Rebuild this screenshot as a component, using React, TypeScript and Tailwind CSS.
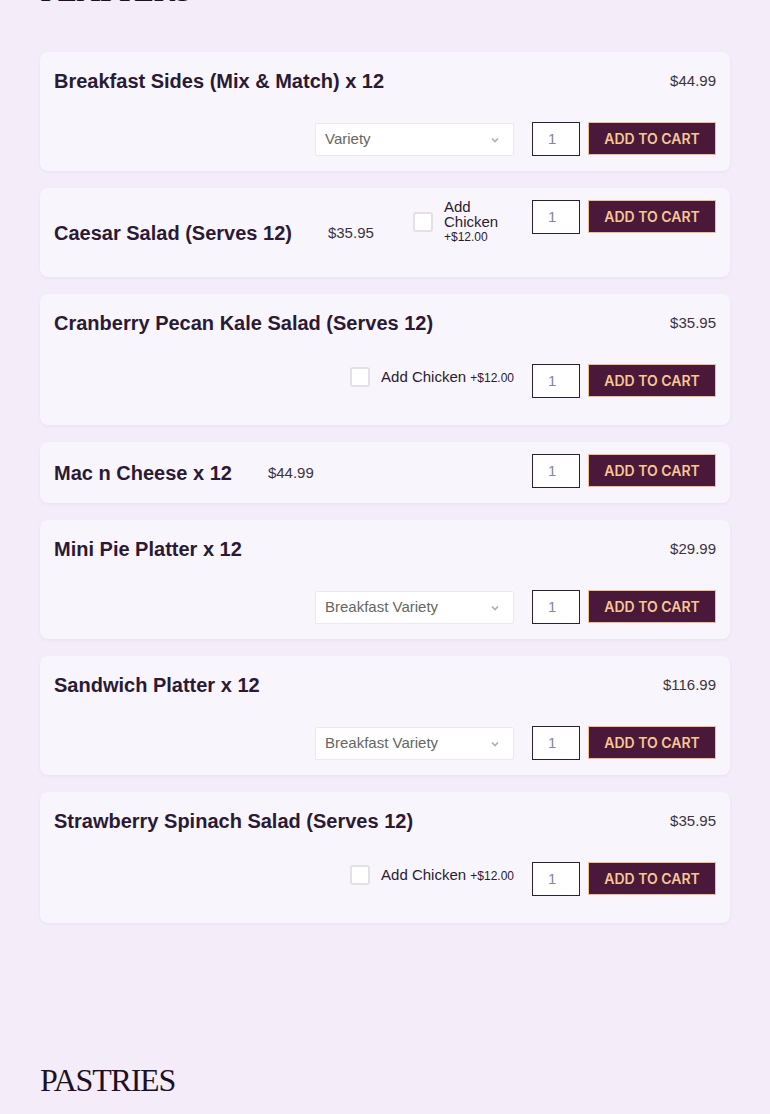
import type { FC } from "react";

type Item = {
  name: string;
  price: string;
  layout: "stacked" | "inline";
  select?: string;
  chicken?: boolean;
};

const items: Item[] = [
  { name: "Breakfast Sides (Mix & Match) x 12", price: "$44.99", layout: "stacked", select: "Variety" },
  { name: "Caesar Salad (Serves 12)", price: "$35.95", layout: "inline", chicken: true },
  { name: "Cranberry Pecan Kale Salad (Serves 12)", price: "$35.95", layout: "stacked", chicken: true },
  { name: "Mac n Cheese x 12", price: "$44.99", layout: "inline" },
  { name: "Mini Pie Platter x 12", price: "$29.99", layout: "stacked", select: "Breakfast Variety" },
  { name: "Sandwich Platter x 12", price: "$116.99", layout: "stacked", select: "Breakfast Variety" },
  { name: "Strawberry Spinach Salad (Serves 12)", price: "$35.95", layout: "stacked", chicken: true },
];

const sans = "font-['Liberation_Sans',Arial,sans-serif]";

const Qty: FC = () => (
  <div className="flex h-[34px] w-[48px] items-center border border-[#2a2230] bg-white pl-[15px] text-[15px] text-[#8a8590]">
    1
  </div>
);

const AddButton: FC = () => (
  <button
    type="button"
    className="ml-2 flex h-[33px] w-[128px] items-center justify-center border border-[#f0c08e] bg-[#4a1839] font-['Inter',sans-serif] text-[14px] font-semibold text-[#f6c896]"
  >
    ADD TO CART
  </button>
);

const Check: FC = () => (
  <span className="block h-5 w-5 shrink-0 rounded-[3px] border-2 border-[#e4e0e6] bg-white" />
);

const Select: FC<{ label: string }> = ({ label }) => (
  <div className="mr-[18px] mt-px flex h-[33px] w-[199px] items-center justify-between rounded-[2px] border border-[#ece8ee] bg-white pl-[9px] pr-[14px] text-[15px] text-[#666]">
    <span>{label}</span>
    <svg width="8" height="6" viewBox="0 0 8 6">
      <path d="M1 1.5 L4 4.5 L7 1.5" fill="none" stroke="#b0acb3" strokeWidth="1.6" />
    </svg>
  </div>
);

const Card: FC<{ item: Item }> = ({ item }) => {
  const title = (
    <h3 className="text-[20px] font-bold leading-6 text-[#2b1a33]">{item.name}</h3>
  );
  const price = <span className="text-[15px] text-[#3b3340]">{item.price}</span>;

  if (item.layout === "inline") {
    return (
      <div className={`flex items-center rounded-lg bg-[#f9f5fc] px-[14px] shadow-[0_1px_3px_rgba(120,90,150,0.08)] ${item.chicken ? "h-[89px]" : "h-[61px]"}`}>
        {title}
        <span className="ml-9">{price}</span>
        <div className="ml-auto flex items-start self-start pt-3">
          {item.chicken && (
            <div className="mr-[18px] -mt-px flex items-center">
              <Check />
              <div className="ml-[11px] w-[70px] text-[15px] leading-[15px] text-[#2b1a33]">
                Add Chicken
                <div className="text-[12px] leading-[16px]">+$12.00</div>
              </div>
            </div>
          )}
          <Qty />
          <AddButton />
        </div>
      </div>
    );
  }

  return (
    <div className={`rounded-lg bg-[#f9f5fc] px-[14px] pt-[17px] shadow-[0_1px_3px_rgba(120,90,150,0.08)] ${item.chicken ? "pb-[27px]" : "pb-[15px]"}`}>
      <div className="flex items-center justify-between">
        {title}
        {price}
      </div>
      <div className="mt-[29px] flex items-start justify-end">
        {item.select && <Select label={item.select} />}
        {item.chicken && (
          <div className="mr-[18px] mt-[2px] flex items-center">
            <Check />
            <span className="ml-[11px] text-[15px] text-[#2b1a33]">
              Add Chicken <span className="text-[12px]">+$12.00</span>
            </span>
          </div>
        )}
        <Qty />
        <AddButton />
      </div>
    </div>
  );
};

export default function App() {
  return (
    <div className={`min-h-[1114px] overflow-hidden bg-[#f4ecf9] px-10 ${sans}`}>
      <h2 className="-mt-[30px] font-['Liberation_Serif',serif] text-[33px] leading-10 tracking-[-1px] text-[#1c1024]">
        PLATTERS
      </h2>
      <div className="mt-[42px] flex flex-col gap-[17px]">
        {items.map((item) => (
          <Card key={item.name} item={item} />
        ))}
      </div>
      <h2 className="mt-[137px] font-['Liberation_Serif',serif] text-[32px] leading-10 tracking-[-1.2px] text-[#1c1024]">
        PASTRIES
      </h2>
    </div>
  );
}
